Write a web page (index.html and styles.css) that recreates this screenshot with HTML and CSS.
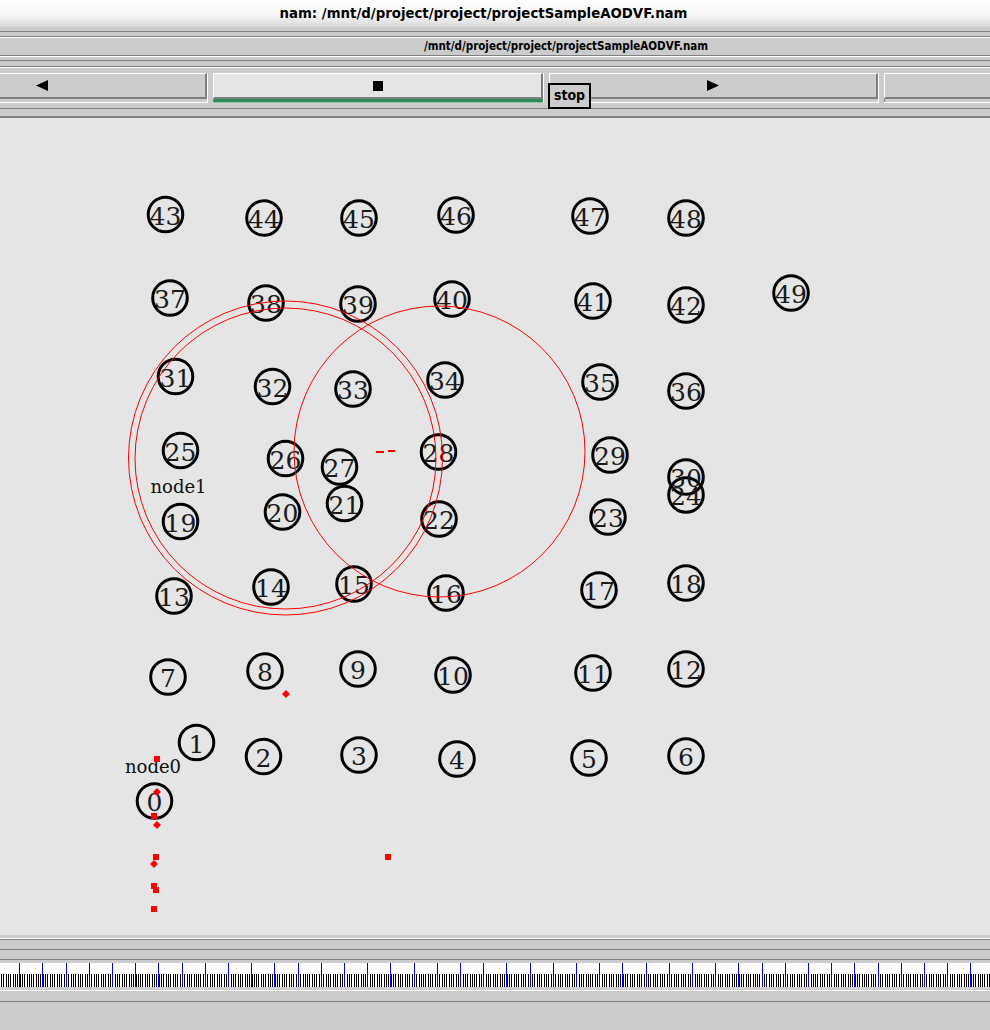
FILE: index.html
```html
<!DOCTYPE html>
<html>
<head>
<meta charset="utf-8">
<title>nam</title>
<link rel="stylesheet" href="styles.css">
</head>
<body>
<header class="titlebar">nam: /mnt/d/project/project/projectSampleAODVF.nam</header>
<div class="gap4"></div>
<div class="dk"></div>
<div class="gap4"></div>
<div class="dk"></div>
<div class="filebar">/mnt/d/project/project/projectSampleAODVF.nam</div>
<div class="lt"></div>
<div class="gap3"></div>
<div class="dk"></div>
<div class="gap5"></div>
<div class="dk"></div>
<div class="lt"></div>
<div class="gap5"></div>
<div class="toolbar">
  <div class="cell">
    <div class="btn"><svg class="ico" width="12" height="11" viewBox="0 0 12 11"><polygon points="0,5.5 12,0 12,11"/></svg></div>
    <div class="under"></div>
  </div>
  <div class="cell wide active">
    <div class="btn"><span class="sq"></span></div>
    <div class="under"></div>
  </div>
  <div class="cell">
    <div class="btn"><svg class="ico" width="12" height="11" viewBox="0 0 12 11"><polygon points="0,0 12,5.5 0,11"/></svg></div>
    <div class="under"></div>
  </div>
  <div class="cell">
    <div class="btn"></div>
    <div class="under"></div>
  </div>
  <div class="tip">stop</div>
</div>
<div class="gap5"></div>
<div class="dk"></div>
<div class="gap7"></div>
<div class="dk2"></div>
<main class="canvas">
<svg class="net" width="990" height="817" viewBox="0 0 990 817">
  <g class="nodes">
    <circle cx="154.5" cy="683" r="17.3"/>
    <circle cx="196.5" cy="624.5" r="17.3"/>
    <circle cx="263.5" cy="638.5" r="17.3"/>
    <circle cx="359" cy="637" r="17.3"/>
    <circle cx="457" cy="641" r="17.3"/>
    <circle cx="589" cy="640" r="17.3"/>
    <circle cx="686" cy="638" r="17.3"/>
    <circle cx="168" cy="559" r="17.3"/>
    <circle cx="265" cy="553" r="17.3"/>
    <circle cx="358" cy="551" r="17.3"/>
    <circle cx="453" cy="557" r="17.3"/>
    <circle cx="593" cy="555" r="17.3"/>
    <circle cx="686" cy="551" r="17.3"/>
    <circle cx="174" cy="478" r="17.3"/>
    <circle cx="271" cy="469" r="17.3"/>
    <circle cx="354" cy="466" r="17.3"/>
    <circle cx="446" cy="475" r="17.3"/>
    <circle cx="599" cy="472" r="17.3"/>
    <circle cx="686" cy="465" r="17.3"/>
    <circle cx="180.5" cy="403.5" r="17.3"/>
    <circle cx="282.5" cy="394" r="17.3"/>
    <circle cx="344.5" cy="385.5" r="17.3"/>
    <circle cx="439" cy="401" r="17.3"/>
    <circle cx="608" cy="399" r="17.3"/>
    <circle cx="686" cy="377" r="17.3"/>
    <circle cx="180.5" cy="332.5" r="17.3"/>
    <circle cx="285.5" cy="340.5" r="17.3"/>
    <circle cx="339.5" cy="349" r="17.3"/>
    <circle cx="438.5" cy="334" r="17.3"/>
    <circle cx="610" cy="337" r="17.3"/>
    <circle cx="686" cy="359" r="17.3"/>
    <circle cx="175.5" cy="258.5" r="17.3"/>
    <circle cx="272.5" cy="268.5" r="17.3"/>
    <circle cx="353" cy="271" r="17.3"/>
    <circle cx="445" cy="262" r="17.3"/>
    <circle cx="600" cy="264" r="17.3"/>
    <circle cx="686" cy="273" r="17.3"/>
    <circle cx="170" cy="180" r="17.3"/>
    <circle cx="266" cy="185" r="17.3"/>
    <circle cx="358" cy="186" r="17.3"/>
    <circle cx="452" cy="181" r="17.3"/>
    <circle cx="593" cy="183" r="17.3"/>
    <circle cx="686" cy="187" r="17.3"/>
    <circle cx="165.5" cy="96.5" r="17.3"/>
    <circle cx="264" cy="100" r="17.3"/>
    <circle cx="359" cy="100" r="17.3"/>
    <circle cx="456" cy="97" r="17.3"/>
    <circle cx="590" cy="98" r="17.3"/>
    <circle cx="686" cy="100" r="17.3"/>
    <circle cx="791" cy="175" r="17.3"/>
  </g>
  <g class="labels">
    <text x="154.5" y="693">0</text>
    <text x="196.5" y="634.5">1</text>
    <text x="263.5" y="648.5">2</text>
    <text x="359" y="647">3</text>
    <text x="457" y="651">4</text>
    <text x="589" y="650">5</text>
    <text x="686" y="648">6</text>
    <text x="168" y="569">7</text>
    <text x="265" y="563">8</text>
    <text x="358" y="561">9</text>
    <text x="453" y="567">10</text>
    <text x="593" y="565">11</text>
    <text x="686" y="561">12</text>
    <text x="174" y="488">13</text>
    <text x="271" y="479">14</text>
    <text x="354" y="476">15</text>
    <text x="446" y="485">16</text>
    <text x="599" y="482">17</text>
    <text x="686" y="475">18</text>
    <text x="180.5" y="413.5">19</text>
    <text x="282.5" y="404">20</text>
    <text x="344.5" y="395.5">21</text>
    <text x="439" y="411">22</text>
    <text x="608" y="409">23</text>
    <text x="686" y="387">24</text>
    <text x="180.5" y="342.5">25</text>
    <text x="285.5" y="350.5">26</text>
    <text x="339.5" y="359">27</text>
    <text x="438.5" y="344">28</text>
    <text x="610" y="347">29</text>
    <text x="686" y="369">30</text>
    <text x="175.5" y="268.5">31</text>
    <text x="272.5" y="278.5">32</text>
    <text x="353" y="281">33</text>
    <text x="445" y="272">34</text>
    <text x="600" y="274">35</text>
    <text x="686" y="283">36</text>
    <text x="170" y="190">37</text>
    <text x="266" y="195">38</text>
    <text x="358" y="196">39</text>
    <text x="452" y="191">40</text>
    <text x="593" y="193">41</text>
    <text x="686" y="197">42</text>
    <text x="165.5" y="106.5">43</text>
    <text x="264" y="110">44</text>
    <text x="359" y="110">45</text>
    <text x="456" y="107">46</text>
    <text x="590" y="108">47</text>
    <text x="686" y="110">48</text>
    <text x="791" y="185">49</text>
  </g>
  <g class="names">
    <text x="150.5" y="375.3">node1</text>
    <text x="125" y="655.3">node0</text>
  </g>
  <g class="ranges">
    <circle cx="285.5" cy="340" r="157"/>
    <circle cx="285.5" cy="340.5" r="150.5"/>
    <circle cx="439.5" cy="333.5" r="145.5"/>
  </g>
  <g class="dash">
    <line x1="376" y1="334" x2="384" y2="334"/>
    <line x1="388" y1="333" x2="395" y2="333"/>
  </g>
  <g class="pkts">
    <rect x="154" y="638" width="6" height="6"/>
    <rect x="151" y="695" width="6" height="6"/>
    <rect x="153" y="736" width="6" height="6"/>
    <rect x="151" y="765" width="6" height="6"/>
    <rect x="153" y="769" width="6" height="6"/>
    <rect x="151" y="788" width="6" height="6"/>
    <rect x="385" y="736" width="6" height="6"/>
    <polygon points="157,670 161,674 157,678 153,674"/>
    <polygon points="157,703 161,707 157,711 153,707"/>
    <polygon points="154,742 158,746 154,750 150,746"/>
    <polygon points="286,572 290,576 286,580 282,576"/>
  </g>
</svg>
</main>
<div class="gap3"></div>
<div class="lt"></div>
<div class="dk"></div>
<div class="gap9"></div>
<div class="dk"></div>
<div class="gap9"></div>
<div class="dk"></div>
<div class="gap3"></div>
<div class="ruler">
  <svg width="990" height="24" viewBox="0 0 990 24">
    <line class="minor" x1="1" y1="17.5" x2="990" y2="17.5"/>
    <line class="major" x1="19.3" y1="12" x2="990" y2="12"/>
  </svg>
</div>
<div class="gap3"></div>
<div class="lt"></div>
<div class="gap10"></div>
<div class="dk"></div>
</body>
</html>
```

FILE: styles.css
```css
* { box-sizing: border-box; }
html, body { margin: 0; padding: 0; }
body {
  width: 990px;
  height: 1030px;
  overflow: hidden;
  background: #cccccc;
  font-family: "DejaVu Sans Condensed", "DejaVu Sans", sans-serif;
  font-stretch: condensed;
  color: #000;
}
.titlebar {
  height: 27px;
  padding-right: 23px;
  text-align: center;
  font-weight: bold;
  font-size: 14.8px;
  line-height: 26px;
  background: linear-gradient(#ffffff 0%, #f6f6f6 55%, #d8d8d8 100%);
}
.gap3 { height: 3px; }
.gap4 { height: 4px; }
.gap5 { height: 5px; }
.gap7 { height: 7px; }
.gap9 { height: 9px; }
.gap10 { height: 10px; }
.dk { height: 1px; background: #7f7f7f; }
.dk2 { height: 2px; background: #7f7f7f; }
.lt { height: 1px; background: #ffffff; }
.filebar {
  height: 19px;
  border-top: 1px solid #fff;
  border-bottom: 1px solid #7f7f7f;
  padding-left: 142px;
  text-align: center;
  font-weight: bold;
  font-size: 11.5px;
  line-height: 17px;
}
.toolbar {
  position: relative;
  height: 30px;
  display: flex;
  gap: 5px;
  margin-left: -122px;
}
.cell {
  flex: none;
  width: 330px;
  display: flex;
  flex-direction: column;
  border-right: 1px solid #fff;
  border-bottom: 1px solid #fff;
}
.cell.wide { width: 331px; }
.btn {
  height: 26px;
  display: flex;
  align-items: center;
  justify-content: center;
  background: #cccccc;
  border-top: 1px solid #fff;
  border-left: 1px solid #fff;
  border-right: 2px solid #7f7f7f;
  border-bottom: 2px solid #7f7f7f;
}
.under {
  flex: 1;
  border-left: 1px solid #7f7f7f;
}
.cell.active { border-bottom-color: #8fc4a6; }
.cell.active .btn { background: #e5e5e5; }
.cell.active .under { background: #2e8b57; }
.ico { display: block; fill: #000; }
.sq { display: block; width: 10px; height: 10px; background: #000; }
.tip {
  position: absolute;
  left: 670px;
  top: 10px;
  width: 43px;
  height: 26px;
  border: 2px solid #000;
  background: #cccccc;
  font-weight: bold;
  font-size: 14px;
  line-height: 21px;
  text-align: center;
  z-index: 2;
}
.canvas {
  display: block;
  height: 817px;
  background: #e5e5e5;
  overflow: hidden;
}
.net { display: block; font-stretch: normal; }
.nodes circle { fill: none; stroke: #000; stroke-width: 3; }
.labels text {
  font-family: "DejaVu Serif", serif;
  font-stretch: normal;
  font-size: 25px;
  text-anchor: middle;
  fill: #1a1a1a;
}
.names text {
  font-family: "DejaVu Serif", serif;
  font-stretch: normal;
  font-size: 18px;
  fill: #111;
}
.ranges circle { fill: none; stroke: #ff0000; stroke-width: 1; }
.dash line { stroke: #ff0000; stroke-width: 2; }
.pkts rect, .pkts polygon { fill: #ff0000; }
.ruler {
  height: 24px;
  background: #ffffff;
}
.ruler svg { display: block; shape-rendering: crispEdges; }
.ruler .minor { stroke: #000; stroke-width: 13; stroke-dasharray: 1 1.3195; }
.ruler .major { stroke: #0000ff; stroke-width: 24; stroke-dasharray: 1 22.195; }
```
